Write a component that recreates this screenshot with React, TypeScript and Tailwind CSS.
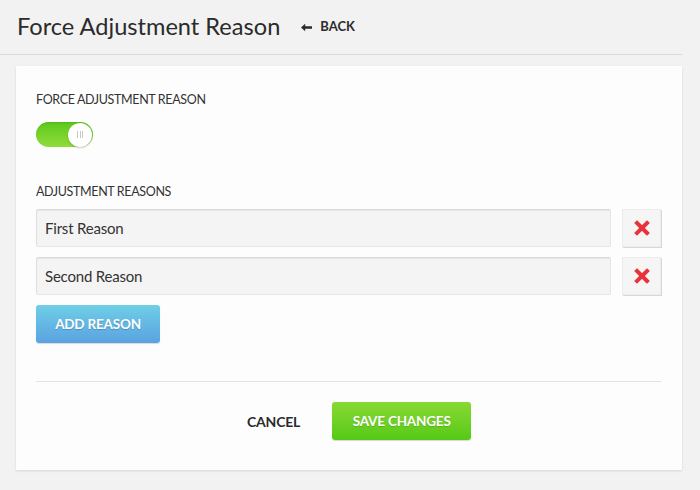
import React from "react";

const font = { fontFamily: "Lato, 'Noto Sans', sans-serif" };

function XIcon() {
  return (
    <svg width="16" height="16" viewBox="0 0 16 16">
      <path d="M3 3 L13 13 M13 3 L3 13" stroke="#e8333a" strokeWidth="4" strokeLinecap="square" />
    </svg>
  );
}

function ReasonRow({ value }: { value: string }) {
  return (
    <div className="flex gap-[11px] items-stretch">
      <div className="flex-1 h-[38px] bg-[#f4f4f4] border border-[#e6e6e6] border-t-[#d9d9d9] border-l-[#dedede] rounded-[2px] shadow-[inset_0_1px_1px_rgba(0,0,0,0.06)] flex items-center px-[8px] text-[15px] text-[#333] tracking-[-0.2px]">
        {value}
      </div>
      <button className="w-[39px] h-[38px] bg-[#f5f5f5] border border-[#ececec] shadow-[1px_1px_0_#d8d8d8] flex items-center justify-center">
        <XIcon />
      </button>
    </div>
  );
}

export default function App() {
  return (
    <div style={font} className="w-[700px] h-[490px] bg-[#f2f2f2] overflow-hidden text-[#333]">
      <div className="h-[55px] mr-[18px] border-b border-[#d9d9d9] flex items-center pl-[17px] gap-[21px]">
        <h1 className="text-[23.6px] text-[#2b2b2b] leading-none">Force Adjustment Reason</h1>
        <a className="flex items-center gap-[8px] text-[13px] font-bold text-[#2b2b2b]">
          <svg width="11" height="9" viewBox="0 0 11 9">
            <path d="M0 4.5 L4.2 0.8 L4.2 3.3 L11 3.3 L11 5.7 L4.2 5.7 L4.2 8.2 Z" fill="#2b2b2b" />
          </svg>
          BACK
        </a>
      </div>
      <div className="mt-[11px] ml-[16px] w-[666px] h-[404px] bg-[#fdfdfd] shadow-[0_1px_2px_rgba(0,0,0,0.12)] px-[20px] pt-[27px] flex flex-col">
        <div className="text-[12.5px] text-[#333] leading-[14px] tracking-[-0.35px]">FORCE ADJUSTMENT REASON</div>
        <div className="mt-[15px] w-[57px] h-[25px] rounded-full bg-gradient-to-b from-[#5bc91a] to-[#90dc3a] relative shadow-[inset_0_1px_2px_rgba(0,0,0,0.1)]">
          <div className="absolute right-[1px] top-[0.5px] w-[24px] h-[24px] rounded-full bg-white shadow-[0_1px_2px_rgba(0,0,0,0.2)] flex items-center justify-center gap-[1.5px]">
            <span className="w-[1px] h-[7px] bg-[#c8c8c8]" />
            <span className="w-[1px] h-[7px] bg-[#c8c8c8]" />
            <span className="w-[1px] h-[7px] bg-[#c8c8c8]" />
          </div>
        </div>
        <div className="mt-[38px] text-[12.5px] leading-[14px] tracking-[-0.35px]">ADJUSTMENT REASONS</div>
        <div className="mt-[10px] flex flex-col gap-[10px] pr-[1px]">
          <ReasonRow value="First Reason" />
          <ReasonRow value="Second Reason" />
        </div>
        <button className="mt-[10px] w-[124px] h-[38px] rounded-[3px] bg-gradient-to-b from-[#6fcfe6] to-[#5aa2e1] text-white font-bold text-[13.5px] tracking-[-0.2px] [text-shadow:0_1px_1px_rgba(0,0,0,0.2)] shadow-[0_1px_1px_rgba(0,0,0,0.15)]">
          ADD REASON
        </button>
        <div className="mt-[38px] border-t border-[#e2e2e2] mr-[1px]" />
        <div className="mt-[20px] flex items-center gap-[32px] pl-[211px]">
          <button className="text-[14px] font-bold text-[#2b2b2b] tracking-[-0.2px]">CANCEL</button>
          <button className="w-[139px] h-[38px] rounded-[3px] bg-gradient-to-b from-[#87d932] to-[#55c916] text-white font-bold text-[13.5px] tracking-[-0.2px] [text-shadow:0_1px_1px_rgba(0,0,0,0.15)] shadow-[0_1px_1px_rgba(0,0,0,0.15)]">
            SAVE CHANGES
          </button>
        </div>
      </div>
    </div>
  );
}
